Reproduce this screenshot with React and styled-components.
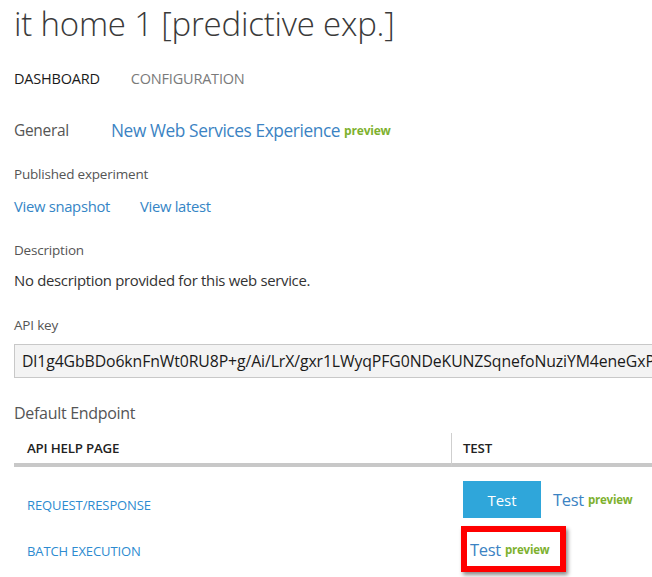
import React from "react";
import styled, { createGlobalStyle } from "styled-components";

const Global = createGlobalStyle`
  html, body { margin: 0; padding: 0; background: #fff; }
  body { font-family: "Open Sans", "Noto Sans", sans-serif; overflow: hidden; }
`;

const Page = styled.div`
  width: 652px;
  height: 577px;
  overflow: hidden;
  padding-left: 14px;
  box-sizing: border-box;
`;

const Title = styled.h1`
  margin: 0;
  padding-top: 1px;
  font-size: 33px;
  font-weight: 300;
  line-height: 46px;
  color: #3a3a3a;
  white-space: nowrap;
  letter-spacing: -0.2px;
`;

const Tabs = styled.div`
  display: flex;
  gap: 31px;
  margin-top: 21px;
  height: 20px;
  align-items: center;
`;

const Tab = styled.span`
  font-size: 14.5px;
  color: ${(p) => (p.$active ? "#1a1a1a" : "#7a7a7a")};
  letter-spacing: -0.2px;
`;

const GeneralRow = styled.div`
  display: flex;
  align-items: center;
  margin-top: 30px;
  height: 24px;
`;

const SectionLabel = styled.span`
  font-size: 15.5px;
  color: #555;
  width: 97px;
  letter-spacing: -0.3px;
`;

const BigLink = styled.a`
  font-size: 17.3px;
  color: #3b83c3;
  text-decoration: none;
  letter-spacing: -0.4px;
`;

const Preview = styled.sup`
  font-size: ${(p) => p.$size || 11.5}px;
  font-weight: 700;
  color: #7eb12e;
  margin-left: 4px;
  vertical-align: ${(p) => p.$raise || 6}px;
  letter-spacing: -0.2px;
`;

const Label = styled.div`
  font-size: 13.5px;
  color: #555;
  height: 20px;
  line-height: 20px;
  margin-top: ${(p) => p.$mt}px;
  letter-spacing: -0.2px;
`;

const LinkRow = styled.div`
  display: flex;
  gap: 30px;
  height: 20px;
  line-height: 20px;
  margin-top: ${(p) => p.$mt}px;
`;

const Link = styled.a`
  font-size: 14.8px;
  color: #3585c6;
  text-decoration: none;
  letter-spacing: -0.3px;
`;

const Text = styled.div`
  font-size: 14.9px;
  color: #333;
  height: 20px;
  line-height: 20px;
  margin-top: ${(p) => p.$mt}px;
  letter-spacing: -0.3px;
`;

const KeyBox = styled.div`
  margin-top: 9px;
  height: 34px;
  width: 700px;
  box-sizing: border-box;
  border: 1px solid #c8c8c8;
  background: #f3f3f3;
  padding-left: 7px;
  display: flex;
  align-items: center;
  font-size: 15.8px;
  color: #1a1a1a;
  white-space: nowrap;
  overflow: hidden;
  letter-spacing: -0.1px;
`;

const EndpointTitle = styled.div`
  font-size: 16px;
  color: #555;
  height: 20px;
  line-height: 20px;
  margin-top: 25px;
  letter-spacing: -0.3px;
`;

const Table = styled.div`
  margin-top: 10px;
  width: 700px;
  display: grid;
  grid-template-columns: 437px 1fr;
`;

const HeadCell = styled.div`
  height: 30px;
  display: flex;
  align-items: center;
  padding-left: ${(p) => (p.$divider ? 11 : 13)}px;
  border-left: ${(p) => (p.$divider ? "1px solid #cfcfcf" : "none")};
  border-bottom: 4px solid #c8c8c8;
  font-size: 13.3px;
  font-weight: 600;
  color: #222;
  letter-spacing: -0.2px;
`;

const Cell = styled.div`
  height: ${(p) => p.$h}px;
  display: flex;
  align-items: center;
  padding-left: ${(p) => p.$pl}px;
  padding-top: ${(p) => p.$pt || 0}px;
  box-sizing: border-box;
`;

const RowLink = styled.a`
  font-size: 13px;
  color: #2d8bd0;
  text-decoration: none;
  text-transform: uppercase;
  letter-spacing: -0.1px;
`;

const TestButton = styled.button`
  width: 78px;
  height: 37px;
  background: #2fa6da;
  border: none;
  color: #fff;
  font-family: inherit;
  font-size: 15px;
  padding: 0;
  margin-right: 12px;
`;

const TestLink = styled.a`
  font-size: 16.5px;
  color: #3b83c3;
  text-decoration: none;
  letter-spacing: -0.3px;
`;

const Highlight = styled.div`
  display: flex;
  align-items: center;
  width: 105px;
  height: 46px;
  box-sizing: border-box;
  border: 6px solid #ff0000;
  padding-left: 3px;
  box-shadow: 2px 3px 4px rgba(0, 0, 0, 0.45);
`;

export default function App() {
  return (
    <>
      <Global />
      <Page>
        <Title>it home 1 [predictive exp.]</Title>
        <Tabs>
          <Tab $active>DASHBOARD</Tab>
          <Tab>CONFIGURATION</Tab>
        </Tabs>
        <GeneralRow>
          <SectionLabel>General</SectionLabel>
          <BigLink href="#">New Web Services Experience</BigLink>
          <Preview $size={12} $raise={7}>preview</Preview>
        </GeneralRow>
        <Label $mt={22}>Published experiment</Label>
        <LinkRow $mt={12}>
          <Link href="#">View snapshot</Link>
          <Link href="#">View latest</Link>
        </LinkRow>
        <Label $mt={24}>Description</Label>
        <Text $mt={10}>No description provided for this web service.</Text>
        <Label $mt={25}>API key</Label>
        <KeyBox>Dl1g4GbBDo6knFnWt0RU8P+g/Ai/LrX/gxr1LWyqPFG0NDeKUNZSqnefoNuziYM4eneGxP</KeyBox>
        <EndpointTitle>Default Endpoint</EndpointTitle>
        <Table>
          <HeadCell>API HELP PAGE</HeadCell>
          <HeadCell $divider>TEST</HeadCell>

          <Cell $h={58} $pl={13} $pt={18}>
            <RowLink href="#">Request/Response</RowLink>
          </Cell>
          <Cell $h={58} $pl={12} $pt={7}>
            <TestButton>Test</TestButton>
            <TestLink href="#">Test</TestLink>
            <Preview>preview</Preview>
          </Cell>

          <Cell $h={48} $pl={13} $pt={4}>
            <RowLink href="#">Batch Execution</RowLink>
          </Cell>
          <Cell $h={48} $pl={10}>
            <Highlight>
              <TestLink href="#">Test</TestLink>
              <Preview>preview</Preview>
            </Highlight>
          </Cell>
        </Table>
      </Page>
    </>
  );
}
